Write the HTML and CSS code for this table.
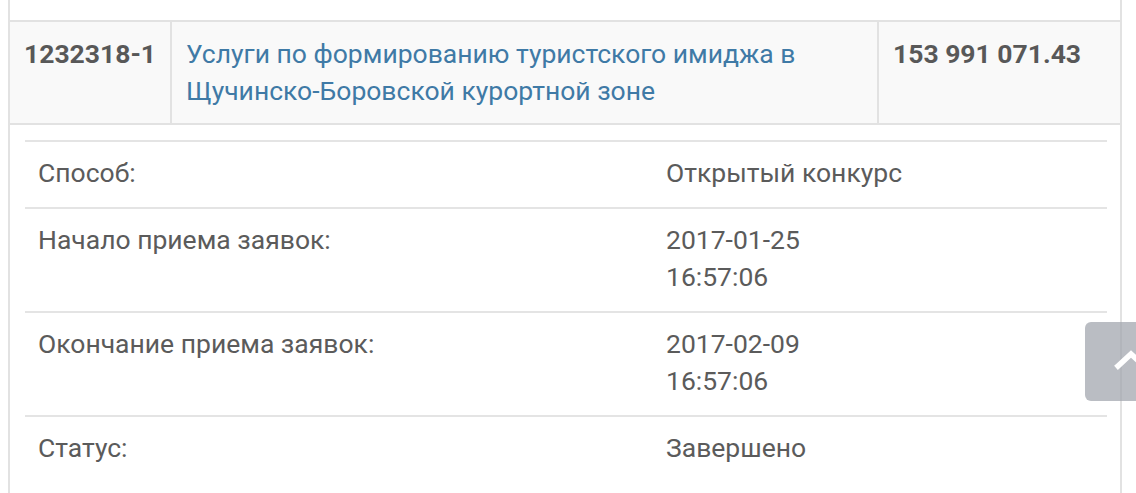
FILE: index.html
```html
<!DOCTYPE html>
<html lang="ru">
<head>
<meta charset="utf-8">
<title>Лот 1232318-1</title>
<link rel="stylesheet" href="styles.css">
</head>
<body>
<div class="page">
  <table class="lots">
    <colgroup>
      <col class="c-num">
      <col class="c-name">
      <col class="c-sum">
    </colgroup>
    <tbody>
      <tr class="prev-row"><td colspan="3"></td></tr>
      <tr class="lot-row">
        <td class="num">1232318-1</td>
        <td class="name"><a href="#">Услуги по формированию туристского имиджа в Щучинско-Боровской курортной зоне</a></td>
        <td class="sum">153 991 071.43</td>
      </tr>
      <tr class="detail-row">
        <td colspan="3">
          <table class="details">
            <colgroup>
              <col class="d-label">
              <col class="d-value">
            </colgroup>
            <tbody>
              <tr><td>Способ:</td><td>Открытый конкурс</td></tr>
              <tr><td>Начало приема заявок:</td><td>2017-01-25<br>16:57:06</td></tr>
              <tr><td>Окончание приема заявок:</td><td>2017-02-09<br>16:57:06</td></tr>
              <tr><td>Статус:</td><td>Завершено</td></tr>
            </tbody>
          </table>
        </td>
      </tr>
    </tbody>
  </table>
  <a class="to-top" href="#" aria-label="Наверх">
    <svg width="34" height="24" viewBox="0 0 34 24"><path d="M4 19 L17 7 L30 19" fill="none" stroke="#fff" stroke-width="5.5" stroke-linecap="square"/></svg>
  </a>
</div>
</body>
</html>
```
FILE: styles.css
```css
html, body {
  margin: 0;
  padding: 0;
  background: #fff;
  overflow: hidden;
}
body {
  font-family: Roboto, "Noto Sans", "DejaVu Sans", sans-serif;
  font-size: 26.5px;
  line-height: 37px;
  color: #555;
}
.page {
  padding-left: 8px;
  width: 1114px;
}
table {
  border-collapse: collapse;
  border-spacing: 0;
}
.lots {
  width: 100%;
  table-layout: fixed;
  border-left: 2px solid #e2e2e2;
  border-right: 2px solid #e2e2e2;
}
.c-num { width: 162px; }
.c-sum { width: 243px; }
.lots td {
  vertical-align: top;
  padding: 15px;
}
.prev-row td {
  height: 20px;
  padding: 0;
  border-bottom: 2px solid #e2e2e2;
}
.lot-row td {
  background: #f9f9f9;
  border-bottom: 2px solid #e2e2e2;
  border-left: 2px solid #e2e2e2;
  padding-top: 13px;
  padding-bottom: 14px;
}
.lot-row td:first-child { border-left: none; }
.num, .sum {
  font-weight: 700;
  color: #585858;
  white-space: nowrap;
}
.num { padding-left: 14px !important; padding-right: 4px !important; }
.sum { padding-left: 14px !important; }
.name a {
  color: #3f7aa6;
  text-decoration: none;
}
.name { padding-left: 14px !important; }
.detail-row td {
  padding: 15px 13px 15px 15px;
  background: #fff;
}
.details {
  width: 100%;
  table-layout: fixed;
}
.d-label { width: 628px; }
.details td {
  border-top: 2px solid #e4e4e4;
  padding: 12px 13px 16px;
  vertical-align: top;
  color: #5b5b5b;
}
.to-top {
  position: absolute;
  left: 1085px;
  top: 322px;
  width: 70px;
  height: 79px;
  border-radius: 6px;
  background: rgba(160, 164, 172, 0.72);
  display: flex;
  align-items: center;
  padding-left: 29px;
  box-sizing: border-box;
}
.to-top svg { display: block; margin-top: -6px; }
```
